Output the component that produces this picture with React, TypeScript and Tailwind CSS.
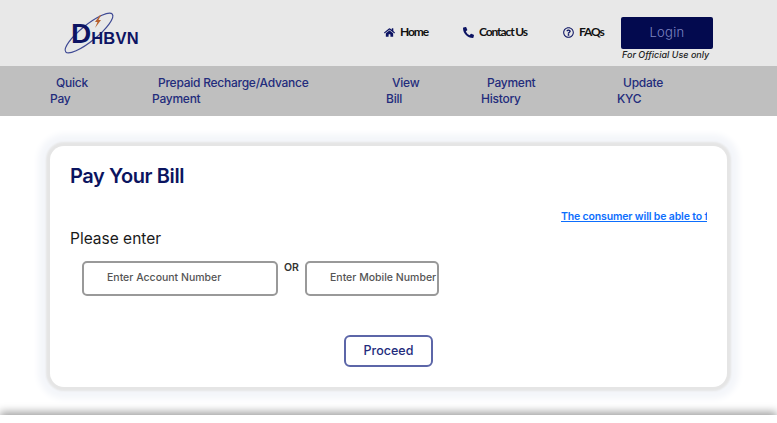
import React from "react";
import { FaHome, FaPhoneAlt, FaRegQuestionCircle } from "react-icons/fa";

const sans = "font-['Inter','Liberation_Sans',sans-serif]";

function Logo() {
  return (
    <div className="relative w-[76px] h-[42px] mt-[13px]">
      <svg className="absolute left-0 top-0 overflow-visible" width="76" height="42" viewBox="0 0 76 42">
        <ellipse cx="24" cy="20" rx="30" ry="8" transform="rotate(-39 24 20)" fill="none" stroke="#3f4a94" strokeWidth="1.2" />
        <path d="M35 2 L30 9 L32.5 9 L30 15 L36 7 L33.5 7 L36 2 Z" fill="#b8602c" />
      </svg>
      <div className="relative flex items-end pl-[6px] pt-[9px] text-[#0d1463] font-['Liberation_Sans',sans-serif] font-bold leading-none">
        <span className="text-[28px] leading-[24px]">D</span>
        <span className="text-[16.5px] leading-[15px] tracking-[0.2px]">HBVN</span>
      </div>
    </div>
  );
}

function TopLink({ icon, label, className }: { icon: React.ReactNode; label: string; className: string }) {
  return (
    <a className={`flex items-center gap-[5px] font-['Lato',sans-serif] font-bold text-[12px] leading-[16px] tracking-[-1.1px] text-[#111] ${className}`}>
      <span className="text-[#0d1463] text-[11px] tracking-normal">{icon}</span>
      {label}
    </a>
  );
}

function NavItem({ a, b, className }: { a: string; b: string; className: string }) {
  return (
    <a className={`block indent-[6px] text-[12px] leading-[16px] font-medium tracking-[-0.25px] text-[#232c7c] ${className}`}>
      {a}
      <br />
      <span className="block indent-0">{b}</span>
    </a>
  );
}

export default function App() {
  return (
    <div className={`w-[777px] h-[423px] overflow-hidden bg-white ${sans}`}>
      <header className="h-[66px] bg-[#e8e8e8] flex pl-[65px]">
        <Logo />
        <div className="flex items-start ml-[243px] pt-[24px]">
          <TopLink icon={<FaHome />} label="Home" className="w-[79px]" />
          <TopLink icon={<FaPhoneAlt />} label="Contact Us" className="w-[100px]" />
          <TopLink icon={<FaRegQuestionCircle />} label="FAQs" className="w-[58px]" />
        </div>
        <div className="flex flex-col pt-[17px] w-[92px]">
          <button className="h-[32px] w-[92px] rounded-[2px] bg-[#030a4f] text-[#7f86c4] text-[13px] font-light tracking-[0.3px]">Login</button>
          <span className="text-[9px] leading-[12px] pl-[1px] italic text-[#222] font-medium whitespace-nowrap">For Official Use only</span>
        </div>
      </header>

      <nav className="h-[50px] bg-[#bfbfbf] flex pl-[50px] pt-[9px]">
        <NavItem a="Quick" b="Pay" className="w-[102px]" />
        <NavItem a="Prepaid Recharge/Advance" b="Payment" className="w-[234px]" />
        <NavItem a="View" b="Bill" className="w-[95px]" />
        <NavItem a="Payment" b="History" className="w-[136px]" />
        <NavItem a="Update" b="KYC" className="w-[80px]" />
      </nav>

      <main className="pt-[30px] pl-[50px]">
        <section className="w-[677px] h-[241px] rounded-[14px] bg-white shadow-[0_0_2px_4px_#e5e5e5,0_0_6px_12px_#f4f6fa] pl-[20px] pr-[20px] pt-[17px]">
          <h1 className="text-[20px] leading-[26px] font-semibold tracking-[-0.4px] text-[#0b1460]">Pay Your Bill</h1>
          <div className="flex justify-end h-[14px] mt-[21px]">
            <a className="w-[146px] overflow-hidden whitespace-nowrap text-[10.5px] leading-[14px] font-semibold tracking-[-0.15px] underline text-[#0d6efd]">
              The consumer will be able to fetch the bill
            </a>
          </div>
          <p className="text-[15.5px] leading-[20px] mt-[5px] text-[#1a1a1a]">Please enter</p>
          <div className="flex items-start mt-[12px] pl-[12px]">
            <input placeholder="Enter Account Number" className="w-[196px] h-[35px] rounded-[5px] border-2 border-[#999] pl-[23px] pb-[2px] text-[10.5px] font-medium placeholder:text-[#555] outline-none" />
            <span className="w-[27px] text-center text-[10.5px] leading-[14px] font-semibold text-[#333]">OR</span>
            <input placeholder="Enter Mobile Number" className="w-[134px] h-[35px] rounded-[5px] border-2 border-[#999] pl-[23px] pb-[2px] text-[10.5px] font-medium placeholder:text-[#555] outline-none" />
          </div>
          <div className="flex pl-[274px] mt-[39px]">
            <button className="w-[89px] h-[32px] rounded-[6px] border-2 border-[#5c66a8] text-[12.5px] font-medium text-[#232c7c]">Proceed</button>
          </div>
        </section>
      </main>

      <footer className="mt-[28px] h-[12px] bg-white shadow-[0_-3px_9px_0_#a0a0a0]" />
    </div>
  );
}
